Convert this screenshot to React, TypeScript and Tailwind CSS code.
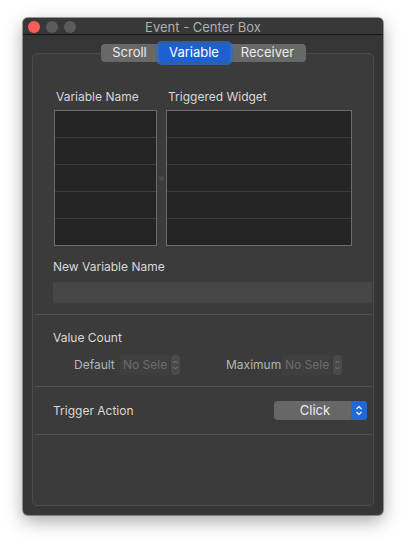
import React from "react";

function Table({ width }: { width: number }) {
  return (
    <div
      className="flex flex-col border border-[#6c6c6c] bg-[#242424]"
      style={{ width }}
    >
      {[0, 1, 2, 3, 4].map((i) => (
        <div
          key={i}
          className={i < 4 ? "h-[27px] border-b border-[#3b3b3b]" : "h-[26px]"}
        />
      ))}
    </div>
  );
}

function Stepper() {
  return (
    <div className="ml-[2px] flex h-[20px] w-[9px] flex-col items-center justify-center rounded-[4px] bg-[#4a4a4a]">
      <svg width="7" height="14" viewBox="0 0 7 14">
        <path d="M1.5 5 L3.5 3 L5.5 5" stroke="#7a7a7a" strokeWidth="1" fill="none" />
        <path d="M1.5 9 L3.5 11 L5.5 9" stroke="#7a7a7a" strokeWidth="1" fill="none" />
      </svg>
    </div>
  );
}

function NoSel() {
  return (
    <div className="flex h-[20px] w-[49px] items-center bg-[#3f3f3f] pl-[3px] text-[12px] text-[#6b6b6b]">
      No Sele
    </div>
  );
}

export default function App() {
  return (
    <div
      className="h-[542px] w-[406px] bg-white pl-[23px] pt-[18px]"
      style={{ fontFamily: "Inter, 'Noto Sans', sans-serif" }}
    >
      <div className="flex h-[497px] w-[360px] flex-col overflow-hidden rounded-[5px] bg-[#363636] shadow-[0_6px_18px_rgba(0,0,0,0.35)] ring-1 ring-[#5a5a5a]/60">
        {/* title bar */}
        <div className="relative flex h-[17px] shrink-0 items-center justify-center border-b border-[#151515] bg-[#383838]">
          <div className="absolute left-[5px] top-[3px] flex gap-[6px]">
            <div className="h-[12px] w-[12px] rounded-full bg-[#fd5d56]" />
            <div className="h-[12px] w-[12px] rounded-full bg-[#5b5b5b]" />
            <div className="h-[12px] w-[12px] rounded-full bg-[#5b5b5b]" />
          </div>
          <span className="mt-[2px] text-[13px] leading-none text-[#aeaeae]">
            Event - Center Box
          </span>
        </div>

        {/* body */}
        <div className="flex flex-1 flex-col px-[9px] pb-[9px] pt-[9px]">
          {/* segmented */}
          <div className="relative z-10 flex justify-center">
            <div className="flex h-[18px] rounded-[4px] bg-[#686868] text-[13px] text-[#ececec]">
              <div className="flex w-[58px] items-center justify-center">Scroll</div>
              <div className="flex w-[71px] items-center justify-center rounded-[3px] bg-[#1b61d4] text-white ring-[3px] ring-[#2d6cbc]/80">
                Variable
              </div>
              <div className="flex w-[76px] items-center justify-center">Receiver</div>
            </div>
          </div>

          {/* box */}
          <div className="-mt-[9px] flex flex-1 flex-col rounded-[5px] border border-[#4b4b4b] bg-[#3b3b3b]">
            <div className="pl-[21px] pt-[36px]">
              <div className="flex h-[14px] items-center text-[12px] leading-none text-[#d8d8d8]">
                <div className="w-[112px] pl-[2px]">Variable Name</div>
                <div className="pl-[2px]">Triggered Widget</div>
              </div>
              <div className="mt-[6px] flex items-center">
                <Table width={103} />
                <div className="flex w-[9px] justify-center">
                  <div className="h-[5px] w-[5px] rounded-full bg-[#4c4c4c]" />
                </div>
                <Table width={186} />
              </div>
            </div>

            <div className="pl-[20px]">
              <div className="mt-[14px] flex h-[14px] items-center text-[12px] leading-none text-[#d8d8d8]">
                New Variable Name
              </div>
              <div className="mr-[1px] mt-[8px] h-[22px] border-b border-[#3e3e3e] bg-[#464646]" />
            </div>

            <div className="ml-[2px] mr-[1px] mt-[10px] h-px bg-[#505050]" />

            <div className="pl-[20px]">
              <div className="mt-[16px] flex h-[14px] items-center text-[12px] leading-none text-[#d8d8d8]">
                Value Count
              </div>
              <div className="mt-[10px] flex h-[20px] items-center text-[12px] text-[#b5b5b5]">
                <div className="ml-[21px] w-[46px]">Default</div>
                <NoSel />
                <Stepper />
                <div className="ml-[46px] w-[56px]">Maximum</div>
                <NoSel />
                <Stepper />
              </div>
            </div>

            <div className="ml-[2px] mr-[1px] mt-[11px] h-px bg-[#505050]" />

            <div className="mt-[14px] flex h-[19px] items-center justify-between pl-[20px] pr-[6px]">
              <span className="text-[12px] text-[#d8d8d8]">Trigger Action</span>
              <div className="flex h-[19px] w-[93px] overflow-hidden rounded-[4px] bg-[#676767]">
                <div className="flex flex-1 items-center justify-center pl-[5px] text-[13px] text-[#ececec]">
                  Click
                </div>
                <div className="flex w-[16px] items-center justify-center bg-[#1f6ad8]">
                  <svg width="8" height="13" viewBox="0 0 8 13">
                    <path d="M1.5 5 L4 2.5 L6.5 5" stroke="white" strokeWidth="1.2" fill="none" />
                    <path d="M1.5 8 L4 10.5 L6.5 8" stroke="white" strokeWidth="1.2" fill="none" />
                  </svg>
                </div>
              </div>
            </div>

            <div className="ml-[2px] mr-[1px] mt-[14px] h-px bg-[#505050]" />
          </div>
        </div>
      </div>
    </div>
  );
}
